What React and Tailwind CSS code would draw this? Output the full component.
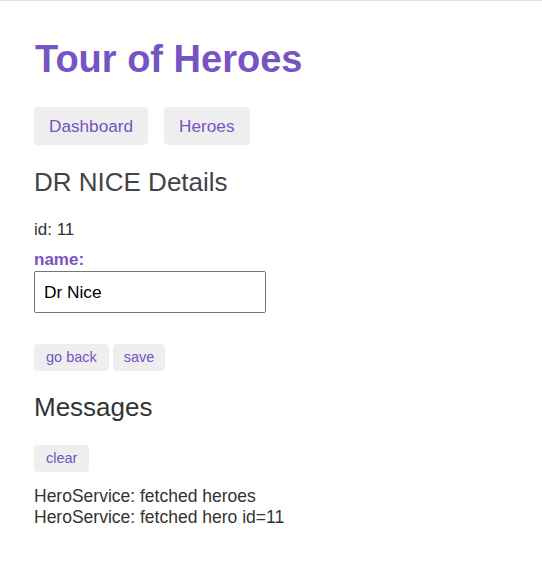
export default function App() {
  const font = { fontFamily: '"Liberation Sans", Arial, sans-serif' };
  return (
    <div
      className="min-h-[576px] w-full border-t border-[#dddddd] bg-white pl-[34px] text-[#333333]"
      style={font}
    >
      <h1 className="mt-[36px] pl-[1px] text-[38px] font-bold leading-[44px] text-[#7654c4]">
        Tour of Heroes
      </h1>
      <nav className="mt-[26px] flex gap-[16px]">
        <a className="rounded-[4px] bg-[#eeeeee] px-[15px] py-[9px] text-[17.2px] leading-[20px] text-[#7654c4]">
          Dashboard
        </a>
        <a className="rounded-[4px] bg-[#eeeeee] px-[15px] py-[9px] text-[17.2px] leading-[20px] text-[#7654c4]">
          Heroes
        </a>
      </nav>
      <h2 className="mt-[22px] text-[26px] leading-[30px] text-[#444444]">DR NICE Details</h2>
      <div className="mt-[23px] text-[17px] leading-[20px]">id: 11</div>
      <div className="mt-[10px] flex flex-col">
        <label className="text-[17px] font-bold leading-[20px] text-[#7654c4]">name:</label>
        <input
          className="mt-[1px] h-[42px] w-[232px] rounded-[2px] border border-[#767676] px-[9px] text-[17.3px] text-black outline-none"
          style={font}
          defaultValue="Dr Nice"
        />
      </div>
      <div className="mt-[31px] flex gap-[4px]">
        <button className="h-[27px] rounded-[4px] bg-[#eeeeee] px-[12px] text-[14.5px] text-[#7654c4]" style={font}>
          go back
        </button>
        <button className="h-[27px] rounded-[4px] bg-[#eeeeee] px-[11px] text-[14.5px] text-[#7654c4]" style={font}>
          save
        </button>
      </div>
      <h2 className="mt-[21px] text-[26px] leading-[30px] text-[#333333]">Messages</h2>
      <button className="mt-[23px] h-[27px] rounded-[4px] bg-[#eeeeee] px-[12px] text-[14.5px] text-[#7654c4]" style={font}>
        clear
      </button>
      <div className="mt-[14px] text-[17.5px] leading-[21px]">
        <div>HeroService: fetched heroes</div>
        <div>HeroService: fetched hero id=11</div>
      </div>
    </div>
  );
}
